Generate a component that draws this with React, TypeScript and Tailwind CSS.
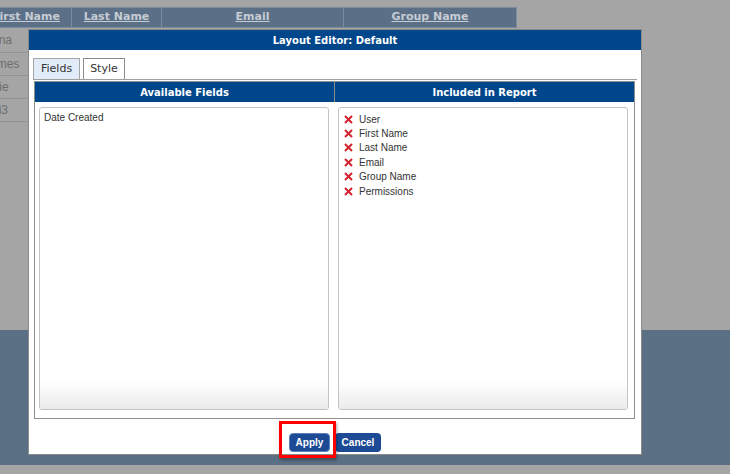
import React from "react";

const dv = { fontFamily: '"DejaVu Sans", Verdana, sans-serif' };
const lib = { fontFamily: '"Liberation Sans", Arial, sans-serif' };

function XIcon() {
  return (
    <svg width="9" height="9" viewBox="0 0 9 9" className="shrink-0">
      <path d="M1 1 L8 8 M8 1 L1 8" stroke="#d3232f" strokeWidth="2" strokeLinecap="butt" />
    </svg>
  );
}

const included = ["User", "First Name", "Last Name", "Email", "Group Name", "Permissions"];

function ListBox({ children }: { children?: React.ReactNode }) {
  return (
    <div className="relative w-[290px] h-[303px] rounded-[3px] border border-[#c4c4c4] bg-white overflow-hidden">
      <div className="absolute bottom-0 left-0 right-0 h-[28px] bg-gradient-to-b from-white to-[#ebebeb]" />
      <div className="relative">{children}</div>
    </div>
  );
}

export default function App() {
  const rows = [
    { name: "Anna", h: "h-[25px]" },
    { name: "James", h: "h-[23px]" },
    { name: "Julie", h: "h-[23px]" },
    { name: "Kai3", h: "h-[23px]" },
  ];
  return (
    <div className="relative w-[730px] h-[474px] overflow-hidden bg-[#a5a5a5]">
      {/* background page */}
      <div className="pt-[7px]">
        <div className="flex -ml-[20px] w-[537px] h-[21px] bg-[#5b6f86] border border-[#7d8c9c] text-[#c6ccd4] text-[11px] font-bold underline" style={dv}>
          <div className="w-[91px] border-r border-[#7d8c9c] flex items-center justify-center">First Name</div>
          <div className="w-[90px] border-r border-[#7d8c9c] flex items-center justify-center">Last Name</div>
          <div className="w-[182px] border-r border-[#7d8c9c] flex items-center justify-center">Email</div>
          <div className="flex-1 flex items-center justify-center">Group Name</div>
        </div>
        {rows.map((r) => (
          <div key={r.name} className={`flex -ml-[20px] w-[537px] ${r.h} border-b border-[#939393] text-[12px] text-[#6e6e6e] items-center`} style={lib}>
            <div className="w-[91px] pl-[4px]">{r.name}</div>
          </div>
        ))}
        <div className="h-[208px]" />
        <div className="h-[135px] bg-[#5b6f85]" />
      </div>

      {/* modal dialog */}
      <div className="absolute left-[28px] top-[29px] w-[614px] h-[426px] bg-white border border-[#8a8a8a]">
        <div className="h-[20px] bg-[#00468a] flex items-center justify-center text-white text-[10px] font-bold" style={dv}>
          Layout Editor: Default
        </div>
        <div className="px-[4px] pt-[8px]">
          <div className="flex gap-[3px] w-[604px] border-b border-[#a0a0a0]" style={dv}>
            <div className="h-[21px] px-[7px] flex items-center border border-b-0 border-[#a7a7a7] bg-[#e2ecf8] text-[11px] text-[#333]">Fields</div>
            <div className="h-[21px] px-[6px] flex items-center border border-b-0 border-[#8a8a8a] bg-white text-[11px] text-[#333]">Style</div>
          </div>
          <div className="ml-[1px] mt-[1px] w-[601px] h-[338px] border border-[#8e8e8e] grid grid-cols-[300px_299px]">
            <div className="flex flex-col">
              <div className="h-[20px] bg-[#00468a] border-r border-[#8c8c8c] flex items-center justify-center text-white text-[10px] font-bold" style={dv}>
                Available Fields
              </div>
              <div className="pl-[4px] pt-[5px]">
                <ListBox>
                  <div className="pl-[4px] pt-[3px] text-[10px] leading-[14px] text-[#333]" style={lib}>Date Created</div>
                </ListBox>
              </div>
            </div>
            <div className="flex flex-col">
              <div className="h-[20px] bg-[#00468a] flex items-center justify-center text-white text-[10px] font-bold" style={dv}>
                Included in Report
              </div>
              <div className="pl-[3px] pt-[5px]">
                <ListBox>
                  <div className="pl-[5px] pt-[4px]">
                    {included.map((f) => (
                      <div key={f} className="flex items-center gap-[6px] h-[14.4px] text-[10px] text-[#333]" style={lib}>
                        <XIcon />
                        <span>{f}</span>
                      </div>
                    ))}
                  </div>
                </ListBox>
              </div>
            </div>
          </div>
          <div className="flex justify-center gap-[5px] mt-[14px]" style={lib}>
            <div className="relative flex">
              <button className="flex items-center justify-center w-[41px] h-[19px] rounded-[4px] bg-[#1d4a95] border border-[#5b7fb8] text-white text-[10px] font-bold leading-none">
                Apply
              </button>
              <div className="absolute -left-[10px] -top-[12px] -right-[6px] -bottom-[6px] border-[3px] border-[#ff0000] shadow-[1px_2px_3px_rgba(0,0,0,0.35)]" />
            </div>
            <button className="flex items-center justify-center w-[46px] h-[19px] rounded-[4px] bg-[#1d4a95] text-white text-[10px] font-bold leading-none">
              Cancel
            </button>
          </div>
        </div>
      </div>
    </div>
  );
}
